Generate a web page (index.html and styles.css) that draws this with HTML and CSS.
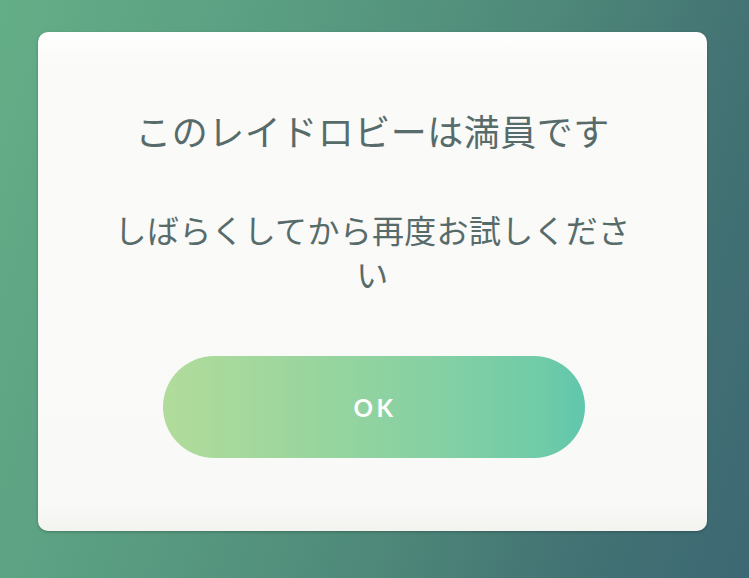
FILE: index.html
```html
<!DOCTYPE html>
<html lang="ja">
<head>
<meta charset="utf-8">
<link rel="stylesheet" href="styles.css">
</head>
<body>
<div class="screen">
  <div class="card">
    <h1 class="title">このレイドロビーは満員です</h1>
    <p class="message">しばらくしてから再度お試しください</p>
    <button class="ok">OK</button>
  </div>
</div>
</body>
</html>
```
FILE: styles.css
```css
html, body {
  margin: 0;
  padding: 0;
}
body {
  width: 749px;
  height: 578px;
  overflow: hidden;
  font-family: "Noto Sans CJK JP", "Noto Sans", sans-serif;
}
.screen {
  width: 749px;
  height: 578px;
  box-sizing: border-box;
  padding: 32px 0 0 38px;
  background: linear-gradient(108deg, #64ae87 0%, #5a9e82 30%, #4e8879 60%, #43737475 80%, #3c6873 100%);
  background: linear-gradient(108deg, #64ae87 0%, #5a9e82 30%, #4e8879 60%, #437374 80%, #3c6873 100%);
}
.card {
  width: 669px;
  height: 499px;
  box-sizing: border-box;
  border-radius: 10px;
  background: linear-gradient(180deg, #ffffff 0%, #fafaf8 6%, #f9f9f7 94%, #f3f3f0 100%);
  box-shadow: 0 1px 3px rgba(0, 0, 0, 0.25);
  display: flex;
  flex-direction: column;
  align-items: center;
  padding-top: 75px;
  color: #576c6a;
}
.title {
  margin: 0;
  font-size: 36px;
  font-weight: 400;
  line-height: 46px;
  letter-spacing: 0.5px;
}
.message {
  margin: 54px 0 0;
  width: 530px;
  text-align: center;
  font-size: 32px;
  line-height: 44px;
  letter-spacing: 0.3px;
}
.ok {
  margin-top: 61px;
  margin-left: 2px;
  width: 422px;
  height: 102px;
  border: none;
  border-radius: 51px;
  background: linear-gradient(90deg, #b1dc9b 0%, #9dd69d 30%, #85d0a3 65%, #6fcba8 90%, #60c6ad 100%);
  color: #ffffff;
  font-family: Lato, "Noto Sans", sans-serif;
  font-weight: 700;
  font-size: 24px;
  letter-spacing: 3.5px;
  padding: 0 0 0 3px;
}
```
